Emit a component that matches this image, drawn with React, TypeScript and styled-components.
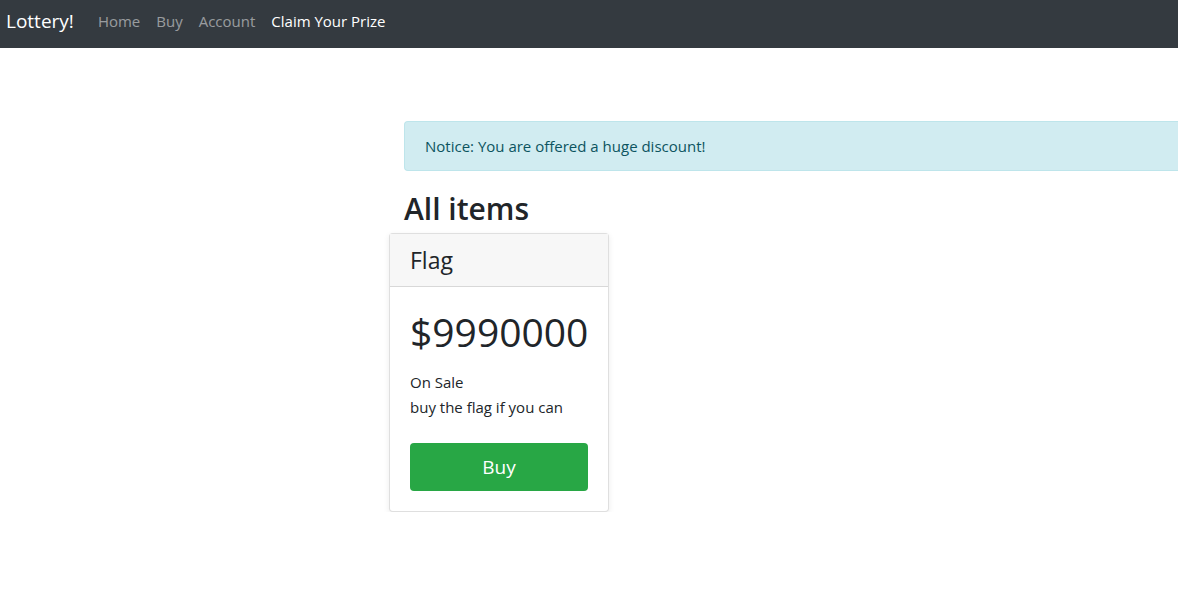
import React from "react";
import styled, { createGlobalStyle } from "styled-components";

const Global = createGlobalStyle`
  html, body { margin: 0; padding: 0; background: #fff; }
  body {
    font-family: "Open Sans", "Noto Sans", sans-serif;
    font-size: 16px;
    line-height: 1.5;
    color: #212529;
  }
  * { box-sizing: border-box; }
`;

const NavBar = styled.nav`
  height: 48px;
  background: #343a40;
  display: flex;
  align-items: center;
  padding: 0 6px 6px;
`;

const Brand = styled.a`
  color: #fff;
  font-size: 19px;
  margin-right: 16px;
  text-decoration: none;
`;

const NavLink = styled.a<{ $active?: boolean }>`
  color: ${(p) => (p.$active ? "#fff" : "rgba(255,255,255,0.5)")};
  font-size: 15px;
  padding: 0 8px;
  text-decoration: none;
`;

const Main = styled.main`
  padding: 73px 0 0 404px;
`;

const Alert = styled.div`
  background: #d1ecf1;
  border: 1px solid #bee5eb;
  border-right: none;
  border-radius: 4px 0 0 4px;
  color: #0c5460;
  height: 50px;
  display: flex;
  align-items: center;
  padding: 0 20px;
  font-size: 15px;
`;

const Heading = styled.h2`
  margin: 20px 0 6px;
  font-size: 30px;
  font-weight: 600;
  line-height: 1.2;
`;

const CardGrid = styled.div`
  margin-left: -15px;
  display: flex;
`;

const Card = styled.div`
  width: 220px;
  border: 1px solid rgba(0, 0, 0, 0.125);
  border-radius: 4px;
  box-shadow: 0 2px 6px rgba(0, 0, 0, 0.08);
  background: #fff;
`;

const CardHeader = styled.div`
  height: 53px;
  background: #f7f7f7;
  border-bottom: 1px solid rgba(0, 0, 0, 0.125);
  padding: 0 20px;
  display: flex;
  align-items: center;
  font-size: 23px;
`;

const CardBody = styled.div`
  padding: 22px 20px 20px;
`;

const Price = styled.h1`
  margin: 0 0 14px;
  font-size: 39px;
  font-weight: 500;
  line-height: 1.2;
`;

const Text = styled.p`
  margin: 0;
  font-size: 15px;
  line-height: 25px;
`;

const BuyButton = styled.button`
  margin-top: 23px;
  width: 178px;
  height: 48px;
  border: none;
  border-radius: 4px;
  background: #28a745;
  color: #fff;
  font-family: inherit;
  font-size: 19px;
  cursor: pointer;
`;

export default function App() {
  return (
    <>
      <Global />
      <NavBar>
        <Brand href="#">Lottery!</Brand>
        <NavLink href="#">Home</NavLink>
        <NavLink href="#">Buy</NavLink>
        <NavLink href="#">Account</NavLink>
        <NavLink href="#" $active>Claim Your Prize</NavLink>
      </NavBar>
      <Main>
        <Alert>Notice: You are offered a huge discount!</Alert>
        <Heading>All items</Heading>
        <CardGrid>
          <Card>
            <CardHeader>Flag</CardHeader>
            <CardBody>
              <Price>$9990000</Price>
              <Text>On Sale</Text>
              <Text>buy the flag if you can</Text>
              <BuyButton>Buy</BuyButton>
            </CardBody>
          </Card>
        </CardGrid>
      </Main>
    </>
  );
}
